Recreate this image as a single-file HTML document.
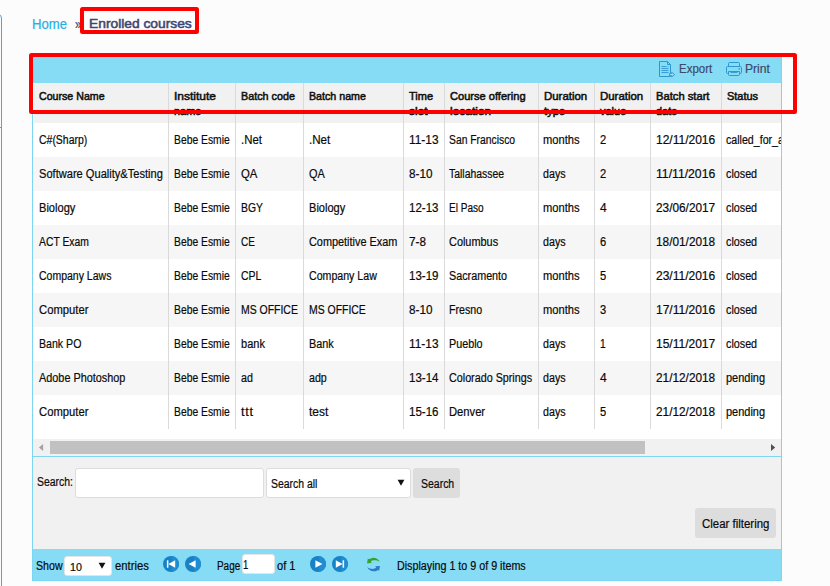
<!DOCTYPE html>
<html>
<head>
<meta charset="utf-8">
<title>Enrolled courses</title>
<style>
html,body{margin:0;padding:0;}
body{width:830px;height:586px;overflow:hidden;position:relative;background:#fcfcfc;font-family:"Liberation Sans",sans-serif;font-size:12px;color:#0a0a0a;}
.a{position:absolute;}
.t{position:absolute;white-space:pre;transform-origin:0 50%;display:block;-webkit-text-stroke:0.2px currentColor;}
.sep{position:absolute;top:83px;height:346px;width:1px;background:#dadada;}
.row{position:absolute;left:33px;width:748px;height:34px;background:#fff;}
.row.g{background:#f6f6f6;}
.red{position:absolute;border:4px solid #ff0000;border-radius:2.5px;box-sizing:border-box;}
.btn{position:absolute;background:#dddddd;border-radius:3px;}
.inp{position:absolute;background:#fff;border:1px solid #dcdcdc;border-radius:3px;box-sizing:border-box;}
</style>
</head>
<body>
<!-- left sidebar edge -->
<div class="a" style="left:-10px;top:14px;width:12px;height:600px;border:1px solid #2ab4e8;border-radius:4px;box-sizing:border-box;"></div>
<div class="a" style="left:0;top:127px;width:1px;height:1px;background:#2ab4e8;"></div>

<!-- grid container -->
<div class="a" style="left:32px;top:56px;width:750px;height:525px;border:1px solid #7cd5f3;box-sizing:border-box;background:#fff;"></div>
<!-- toolbar -->
<div class="a" style="left:33px;top:57px;width:748px;height:26px;background:#87dcf5;"></div>
<!-- header -->
<div class="a" style="left:34px;top:83px;width:747px;height:40px;background:#f1f1f1;"></div>
<!-- rows -->
<div class="row" style="top:123px"></div>
<div class="row g" style="top:157px"></div>
<div class="row" style="top:191px"></div>
<div class="row g" style="top:225px"></div>
<div class="row" style="top:259px"></div>
<div class="row g" style="top:293px"></div>
<div class="row" style="top:327px"></div>
<div class="row g" style="top:361px"></div>
<div class="row" style="top:395px"></div>
<!-- column separators -->
<div class="sep" style="left:168px"></div>
<div class="sep" style="left:235px"></div>
<div class="sep" style="left:303px"></div>
<div class="sep" style="left:403px"></div>
<div class="sep" style="left:444px"></div>
<div class="sep" style="left:538px"></div>
<div class="sep" style="left:594px"></div>
<div class="sep" style="left:650px"></div>
<div class="sep" style="left:721px"></div>

<!-- horizontal scrollbar -->
<div class="a" style="left:33px;top:439px;width:748px;height:17px;background:#f1f1f1;"></div>
<div class="a" style="left:50px;top:441px;width:595px;height:13px;background:#c1c1c1;"></div>
<svg class="a" style="left:38px;top:443px" width="6" height="9" viewBox="0 0 6 9"><path d="M5.1 0.9 L0.9 4.5 L5.1 8.1 Z" fill="#a3a3a3"/></svg>
<svg class="a" style="left:770px;top:443px" width="6" height="9" viewBox="0 0 6 9"><path d="M1.0 0.9 L5.2 4.5 L1.0 8.1 Z" fill="#505050"/></svg>

<!-- search panel -->
<div class="a" style="left:33px;top:456px;width:748px;height:1px;background:#7fd6f3;"></div>
<div class="a" style="left:33px;top:457px;width:748px;height:92px;background:#f1f1f1;"></div>
<div class="inp" style="left:75px;top:468px;width:188.6px;height:29.6px;"></div>
<div class="inp" style="left:266.4px;top:468px;width:144.3px;height:29.6px;"></div>
<svg class="a" style="left:397px;top:479px" width="8" height="8" viewBox="0 0 8 8"><path d="M0.6 0.8 L7.4 0.8 L4 6.8 Z" fill="#111"/></svg>
<div class="btn" style="left:413.4px;top:468px;width:46.6px;height:29.6px;"></div>
<div class="btn" style="left:695px;top:508px;width:81px;height:29.6px;"></div>

<!-- footer / pager -->
<div class="a" style="left:33px;top:549px;width:748px;height:31px;background:#87dcf5;"></div>
<div class="inp" style="left:64.4px;top:556.4px;width:47.2px;height:19.2px;border-color:#e4e4e4;"></div>
<svg class="a" style="left:98px;top:562px" width="8" height="8" viewBox="0 0 8 8"><path d="M0.6 0.8 L7.4 0.8 L4 6.8 Z" fill="#111"/></svg>
<div class="inp" style="left:242px;top:554.3px;width:32.7px;height:19.3px;border-color:#e4e4e4;"></div>

<!-- pager icons -->
<svg class="a" style="left:163px;top:556px" width="16" height="16" viewBox="0 0 16 16"><circle cx="8" cy="8" r="8" fill="#1882c7"/><path d="M8.8 0.04 A8 8 0 0 1 8.8 15.96 Z" fill="#208dd2"/><rect x="3.9" y="4.3" width="1.5" height="7.4" fill="#fff"/><path d="M5.4 8 L12.2 4.3 L12.2 11.7 Z" fill="#fff"/></svg>
<svg class="a" style="left:185px;top:556px" width="16" height="16" viewBox="0 0 16 16"><circle cx="8" cy="8" r="8" fill="#1882c7"/><path d="M8.8 0.04 A8 8 0 0 1 8.8 15.96 Z" fill="#208dd2"/><path d="M3.6 8 L10.6 4.3 L10.6 11.7 Z" fill="#fff"/></svg>
<svg class="a" style="left:310px;top:556px" width="16" height="16" viewBox="0 0 16 16"><circle cx="8" cy="8" r="8" fill="#1882c7"/><path d="M8.8 0.04 A8 8 0 0 1 8.8 15.96 Z" fill="#208dd2"/><path d="M12.4 8 L5.4 4.3 L5.4 11.7 Z" fill="#fff"/></svg>
<svg class="a" style="left:332px;top:556px" width="16" height="16" viewBox="0 0 16 16"><circle cx="8" cy="8" r="8" fill="#1882c7"/><path d="M8.8 0.04 A8 8 0 0 1 8.8 15.96 Z" fill="#208dd2"/><rect x="10.6" y="4.3" width="1.5" height="7.4" fill="#fff"/><path d="M10.6 8 L3.8 4.3 L3.8 11.7 Z" fill="#fff"/></svg>
<!-- refresh -->
<svg class="a" style="left:366px;top:557px" width="15" height="15" viewBox="0 0 15 15">
<path id="rf" d="M13.9 4.9 C12.2 2.2 9.4 0.6 6.6 0.9 C5.2 1.05 3.9 1.6 3.1 2.3 L1.9 1.4 L1.0 6.3 L5.9 6.0 L4.7 4.6 C6.4 3.1 9.8 2.5 13.9 4.9 Z" fill="#35a12e"/>
<path d="M13.9 4.9 C12.2 2.2 9.4 0.6 6.6 0.9 C5.2 1.05 3.9 1.6 3.1 2.3 L1.9 1.4 L1.0 6.3 L5.9 6.0 L4.7 4.6 C6.4 3.1 9.8 2.5 13.9 4.9 Z" fill="#2a7bc8" transform="rotate(180 7.5 7.6)"/>
</svg>

<!-- toolbar icons -->
<svg class="a" style="left:658px;top:61px" width="18" height="17" viewBox="0 0 18 17" fill="none" stroke="#2f97d0" stroke-width="1">
<path d="M1.5 0.5 H9.5 L12.5 3.5 V15.5 H1.5 Z"/><path d="M9.5 0.5 V3.5 H12.5"/>
<path d="M3.5 5.5 H8.5 M9.7 5.5 H10.5 M3.5 7.5 H10.5 M3.5 9.5 H10.5 M3.5 11.5 H10.5" stroke-width="0.9"/>
<path d="M11.5 12.6 H13.7 V11.3 L16.6 13.6 L13.7 15.9 V14.6 H11.5 Z" fill="#a9e5f8"/>
</svg>
<svg class="a" style="left:725px;top:61px" width="18" height="16" viewBox="0 0 18 16" fill="none" stroke="#2f97d0" stroke-width="1">
<path d="M3.5 5.5 V2.5 Q3.5 1.5 4.5 1.5 H13.5 Q14.5 1.5 14.5 2.5 V5.5"/>
<rect x="1.5" y="5.5" width="15" height="7" rx="1.2"/>
<path d="M3.5 10.5 H14.5 V13.5 Q14.5 14.5 13.5 14.5 H4.5 Q3.5 14.5 3.5 13.5 Z" fill="#87dcf5"/>
<path d="M5.5 11.5 H12.5" stroke-width="0.9"/>
<circle cx="14.2" cy="7.9" r="0.45" fill="#2f97d0"/>
</svg>

<!-- clipped cell text (last column) -->
<div class="a" style="left:722px;top:123px;width:59px;height:306px;overflow:hidden;"><div class="a" style="left:-722px;top:-123px;width:830px;height:586px;">
<span class="t" style="left:726.45px;top:132.00px;font-size:12px;line-height:16px;color:#0a0a0a;transform:scaleX(0.8856);">called_for_admission</span>
<span class="t" style="left:726.45px;top:166.00px;font-size:12px;line-height:16px;color:#0a0a0a;transform:scaleX(0.8966);">closed</span>
<span class="t" style="left:726.45px;top:200.00px;font-size:12px;line-height:16px;color:#0a0a0a;transform:scaleX(0.8966);">closed</span>
<span class="t" style="left:726.45px;top:234.00px;font-size:12px;line-height:16px;color:#0a0a0a;transform:scaleX(0.8966);">closed</span>
<span class="t" style="left:726.45px;top:268.00px;font-size:12px;line-height:16px;color:#0a0a0a;transform:scaleX(0.8966);">closed</span>
<span class="t" style="left:726.45px;top:302.00px;font-size:12px;line-height:16px;color:#0a0a0a;transform:scaleX(0.8966);">closed</span>
<span class="t" style="left:726.45px;top:336.00px;font-size:12px;line-height:16px;color:#0a0a0a;transform:scaleX(0.8966);">closed</span>
<span class="t" style="left:726.45px;top:370.00px;font-size:12px;line-height:16px;color:#0a0a0a;transform:scaleX(0.9153);">pending</span>
<span class="t" style="left:726.45px;top:404.00px;font-size:12px;line-height:16px;color:#0a0a0a;transform:scaleX(0.9153);">pending</span>
</div></div>

<span class="t" style="left:32.12px;top:14.60px;font-size:14.0px;line-height:18px;color:#22b0e7;transform:scaleX(0.9374);">Home</span>
<span class="t" style="left:74.83px;top:15.40px;font-size:14.0px;line-height:18px;color:#3d4673;transform:scaleX(0.8105);">»</span>
<span class="t" style="left:89.18px;top:14.80px;font-size:13.5px;line-height:18px;color:#3d4673;transform:scaleX(1.0221);-webkit-text-stroke:0.55px currentColor;">Enrolled courses</span>
<span class="t" style="left:678.95px;top:61.30px;font-size:12.4px;line-height:16px;color:#3d4a6b;transform:scaleX(0.9278);">Export</span>
<span class="t" style="left:745.25px;top:61.30px;font-size:12.4px;line-height:16px;color:#3d4a6b;transform:scaleX(0.9781);">Print</span>
<span class="t" style="left:39.10px;top:88.00px;font-size:11.6px;line-height:15px;color:#111;transform:scaleX(0.9168);-webkit-text-stroke:0.55px currentColor;">Course Name</span>
<span class="t" style="left:174.11px;top:88.00px;font-size:11.6px;line-height:15px;color:#111;transform:scaleX(1.0337);-webkit-text-stroke:0.55px currentColor;">Institute</span>
<span class="t" style="left:174.11px;top:103.00px;font-size:11.6px;line-height:15px;color:#111;transform:scaleX(0.9470);-webkit-text-stroke:0.55px currentColor;">name</span>
<span class="t" style="left:240.61px;top:88.00px;font-size:11.6px;line-height:15px;color:#111;transform:scaleX(0.9287);-webkit-text-stroke:0.55px currentColor;">Batch code</span>
<span class="t" style="left:309.20px;top:88.00px;font-size:11.6px;line-height:15px;color:#111;transform:scaleX(0.9193);-webkit-text-stroke:0.55px currentColor;">Batch name</span>
<span class="t" style="left:408.91px;top:88.00px;font-size:11.6px;line-height:15px;color:#111;transform:scaleX(0.9501);-webkit-text-stroke:0.55px currentColor;">Time</span>
<span class="t" style="left:408.91px;top:103.00px;font-size:11.6px;line-height:15px;color:#111;transform:scaleX(1.0350);-webkit-text-stroke:0.55px currentColor;">slot</span>
<span class="t" style="left:450.31px;top:88.00px;font-size:11.6px;line-height:15px;color:#111;transform:scaleX(0.9559);-webkit-text-stroke:0.55px currentColor;">Course offering</span>
<span class="t" style="left:450.31px;top:103.00px;font-size:11.6px;line-height:15px;color:#111;transform:scaleX(1.0328);-webkit-text-stroke:0.55px currentColor;">location</span>
<span class="t" style="left:544.30px;top:88.00px;font-size:11.6px;line-height:15px;color:#111;transform:scaleX(0.9852);-webkit-text-stroke:0.55px currentColor;">Duration</span>
<span class="t" style="left:544.30px;top:103.00px;font-size:11.6px;line-height:15px;color:#111;transform:scaleX(0.9707);-webkit-text-stroke:0.55px currentColor;">type</span>
<span class="t" style="left:600.30px;top:88.00px;font-size:11.6px;line-height:15px;color:#111;transform:scaleX(0.9852);-webkit-text-stroke:0.55px currentColor;">Duration</span>
<span class="t" style="left:600.30px;top:103.00px;font-size:11.6px;line-height:15px;color:#111;transform:scaleX(0.9480);-webkit-text-stroke:0.55px currentColor;">value</span>
<span class="t" style="left:656.30px;top:88.00px;font-size:11.6px;line-height:15px;color:#111;transform:scaleX(0.9649);-webkit-text-stroke:0.55px currentColor;">Batch start</span>
<span class="t" style="left:656.30px;top:103.00px;font-size:11.6px;line-height:15px;color:#111;transform:scaleX(0.9424);-webkit-text-stroke:0.55px currentColor;">date</span>
<span class="t" style="left:726.90px;top:88.00px;font-size:11.6px;line-height:15px;color:#111;transform:scaleX(0.9423);-webkit-text-stroke:0.55px currentColor;">Status</span>
<span class="t" style="left:38.65px;top:132.00px;font-size:12px;line-height:16px;color:#0a0a0a;transform:scaleX(0.8725);">C#(Sharp)</span>
<span class="t" style="left:173.85px;top:132.00px;font-size:12px;line-height:16px;color:#0a0a0a;transform:scaleX(0.8609);">Bebe Esmie</span>
<span class="t" style="left:240.65px;top:132.00px;font-size:12px;line-height:16px;color:#0a0a0a;transform:scaleX(0.9494);">.Net</span>
<span class="t" style="left:308.75px;top:132.00px;font-size:12px;line-height:16px;color:#0a0a0a;transform:scaleX(0.9676);">.Net</span>
<span class="t" style="left:408.65px;top:132.00px;font-size:12px;line-height:16px;color:#0a0a0a;transform:scaleX(0.9896);">11-13</span>
<span class="t" style="left:449.45px;top:132.00px;font-size:12px;line-height:16px;color:#0a0a0a;transform:scaleX(0.8618);">San Francisco</span>
<span class="t" style="left:543.45px;top:132.00px;font-size:12px;line-height:16px;color:#0a0a0a;transform:scaleX(0.9299);">months</span>
<span class="t" style="left:599.85px;top:132.00px;font-size:12px;line-height:16px;color:#0a0a0a;transform:scaleX(0.9274);">2</span>
<span class="t" style="left:655.85px;top:132.00px;font-size:12px;line-height:16px;color:#0a0a0a;transform:scaleX(1.0005);">12/11/2016</span>
<span class="t" style="left:38.65px;top:166.00px;font-size:12px;line-height:16px;color:#0a0a0a;transform:scaleX(0.9242);">Software Quality&amp;Testing</span>
<span class="t" style="left:173.85px;top:166.00px;font-size:12px;line-height:16px;color:#0a0a0a;transform:scaleX(0.8609);">Bebe Esmie</span>
<span class="t" style="left:240.65px;top:166.00px;font-size:12px;line-height:16px;color:#0a0a0a;transform:scaleX(0.9457);">QA</span>
<span class="t" style="left:308.75px;top:166.00px;font-size:12px;line-height:16px;color:#0a0a0a;transform:scaleX(0.9111);">QA</span>
<span class="t" style="left:408.65px;top:166.00px;font-size:12px;line-height:16px;color:#0a0a0a;transform:scaleX(0.9780);">8-10</span>
<span class="t" style="left:449.45px;top:166.00px;font-size:12px;line-height:16px;color:#0a0a0a;transform:scaleX(0.8695);">Tallahassee</span>
<span class="t" style="left:543.45px;top:166.00px;font-size:12px;line-height:16px;color:#0a0a0a;transform:scaleX(0.8913);">days</span>
<span class="t" style="left:599.85px;top:166.00px;font-size:12px;line-height:16px;color:#0a0a0a;transform:scaleX(0.9274);">2</span>
<span class="t" style="left:655.85px;top:166.00px;font-size:12px;line-height:16px;color:#0a0a0a;transform:scaleX(1.0158);">11/11/2016</span>
<span class="t" style="left:38.65px;top:200.00px;font-size:12px;line-height:16px;color:#0a0a0a;transform:scaleX(0.9249);">Biology</span>
<span class="t" style="left:173.85px;top:200.00px;font-size:12px;line-height:16px;color:#0a0a0a;transform:scaleX(0.8609);">Bebe Esmie</span>
<span class="t" style="left:240.65px;top:200.00px;font-size:12px;line-height:16px;color:#0a0a0a;transform:scaleX(0.8642);">BGY</span>
<span class="t" style="left:308.75px;top:200.00px;font-size:12px;line-height:16px;color:#0a0a0a;transform:scaleX(0.9223);">Biology</span>
<span class="t" style="left:408.65px;top:200.00px;font-size:12px;line-height:16px;color:#0a0a0a;transform:scaleX(0.9609);">12-13</span>
<span class="t" style="left:449.45px;top:200.00px;font-size:12px;line-height:16px;color:#0a0a0a;transform:scaleX(0.8366);">El Paso</span>
<span class="t" style="left:543.45px;top:200.00px;font-size:12px;line-height:16px;color:#0a0a0a;transform:scaleX(0.9299);">months</span>
<span class="t" style="left:599.85px;top:200.00px;font-size:12px;line-height:16px;color:#0a0a0a;transform:scaleX(1.0022);">4</span>
<span class="t" style="left:655.85px;top:200.00px;font-size:12px;line-height:16px;color:#0a0a0a;transform:scaleX(0.9857);">23/06/2017</span>
<span class="t" style="left:38.65px;top:234.00px;font-size:12px;line-height:16px;color:#0a0a0a;transform:scaleX(0.8634);">ACT Exam</span>
<span class="t" style="left:173.85px;top:234.00px;font-size:12px;line-height:16px;color:#0a0a0a;transform:scaleX(0.8609);">Bebe Esmie</span>
<span class="t" style="left:240.65px;top:234.00px;font-size:12px;line-height:16px;color:#0a0a0a;transform:scaleX(0.8339);">CE</span>
<span class="t" style="left:308.75px;top:234.00px;font-size:12px;line-height:16px;color:#0a0a0a;transform:scaleX(0.9068);">Competitive Exam</span>
<span class="t" style="left:408.65px;top:234.00px;font-size:12px;line-height:16px;color:#0a0a0a;transform:scaleX(0.9745);">7-8</span>
<span class="t" style="left:449.45px;top:234.00px;font-size:12px;line-height:16px;color:#0a0a0a;transform:scaleX(0.9088);">Columbus</span>
<span class="t" style="left:543.45px;top:234.00px;font-size:12px;line-height:16px;color:#0a0a0a;transform:scaleX(0.8913);">days</span>
<span class="t" style="left:599.85px;top:234.00px;font-size:12px;line-height:16px;color:#0a0a0a;transform:scaleX(0.9274);">6</span>
<span class="t" style="left:655.85px;top:234.00px;font-size:12px;line-height:16px;color:#0a0a0a;transform:scaleX(0.9857);">18/01/2018</span>
<span class="t" style="left:38.65px;top:268.00px;font-size:12px;line-height:16px;color:#0a0a0a;transform:scaleX(0.8753);">Company Laws</span>
<span class="t" style="left:173.85px;top:268.00px;font-size:12px;line-height:16px;color:#0a0a0a;transform:scaleX(0.8609);">Bebe Esmie</span>
<span class="t" style="left:240.65px;top:268.00px;font-size:12px;line-height:16px;color:#0a0a0a;transform:scaleX(0.8740);">CPL</span>
<span class="t" style="left:308.75px;top:268.00px;font-size:12px;line-height:16px;color:#0a0a0a;transform:scaleX(0.8838);">Company Law</span>
<span class="t" style="left:408.65px;top:268.00px;font-size:12px;line-height:16px;color:#0a0a0a;transform:scaleX(0.9609);">13-19</span>
<span class="t" style="left:449.45px;top:268.00px;font-size:12px;line-height:16px;color:#0a0a0a;transform:scaleX(0.8980);">Sacramento</span>
<span class="t" style="left:543.45px;top:268.00px;font-size:12px;line-height:16px;color:#0a0a0a;transform:scaleX(0.9299);">months</span>
<span class="t" style="left:599.85px;top:268.00px;font-size:12px;line-height:16px;color:#0a0a0a;transform:scaleX(0.9274);">5</span>
<span class="t" style="left:655.85px;top:268.00px;font-size:12px;line-height:16px;color:#0a0a0a;transform:scaleX(1.0005);">23/11/2016</span>
<span class="t" style="left:38.65px;top:302.00px;font-size:12px;line-height:16px;color:#0a0a0a;transform:scaleX(0.9376);">Computer</span>
<span class="t" style="left:173.85px;top:302.00px;font-size:12px;line-height:16px;color:#0a0a0a;transform:scaleX(0.8609);">Bebe Esmie</span>
<span class="t" style="left:240.65px;top:302.00px;font-size:12px;line-height:16px;color:#0a0a0a;transform:scaleX(0.8708);">MS OFFICE</span>
<span class="t" style="left:308.75px;top:302.00px;font-size:12px;line-height:16px;color:#0a0a0a;transform:scaleX(0.8693);">MS OFFICE</span>
<span class="t" style="left:408.65px;top:302.00px;font-size:12px;line-height:16px;color:#0a0a0a;transform:scaleX(0.9780);">8-10</span>
<span class="t" style="left:449.45px;top:302.00px;font-size:12px;line-height:16px;color:#0a0a0a;transform:scaleX(0.8860);">Fresno</span>
<span class="t" style="left:543.45px;top:302.00px;font-size:12px;line-height:16px;color:#0a0a0a;transform:scaleX(0.9299);">months</span>
<span class="t" style="left:599.85px;top:302.00px;font-size:12px;line-height:16px;color:#0a0a0a;transform:scaleX(0.9274);">3</span>
<span class="t" style="left:655.85px;top:302.00px;font-size:12px;line-height:16px;color:#0a0a0a;transform:scaleX(1.0005);">17/11/2016</span>
<span class="t" style="left:38.65px;top:336.00px;font-size:12px;line-height:16px;color:#0a0a0a;transform:scaleX(0.8828);">Bank PO</span>
<span class="t" style="left:173.85px;top:336.00px;font-size:12px;line-height:16px;color:#0a0a0a;transform:scaleX(0.8609);">Bebe Esmie</span>
<span class="t" style="left:240.65px;top:336.00px;font-size:12px;line-height:16px;color:#0a0a0a;transform:scaleX(0.9182);">bank</span>
<span class="t" style="left:308.75px;top:336.00px;font-size:12px;line-height:16px;color:#0a0a0a;transform:scaleX(0.9065);">Bank</span>
<span class="t" style="left:408.65px;top:336.00px;font-size:12px;line-height:16px;color:#0a0a0a;transform:scaleX(0.9896);">11-13</span>
<span class="t" style="left:449.45px;top:336.00px;font-size:12px;line-height:16px;color:#0a0a0a;transform:scaleX(0.8991);">Pueblo</span>
<span class="t" style="left:543.45px;top:336.00px;font-size:12px;line-height:16px;color:#0a0a0a;transform:scaleX(0.8913);">days</span>
<span class="t" style="left:599.85px;top:336.00px;font-size:12px;line-height:16px;color:#0a0a0a;transform:scaleX(0.8526);">1</span>
<span class="t" style="left:655.85px;top:336.00px;font-size:12px;line-height:16px;color:#0a0a0a;transform:scaleX(1.0005);">15/11/2017</span>
<span class="t" style="left:38.65px;top:370.00px;font-size:12px;line-height:16px;color:#0a0a0a;transform:scaleX(0.9055);">Adobe Photoshop</span>
<span class="t" style="left:173.85px;top:370.00px;font-size:12px;line-height:16px;color:#0a0a0a;transform:scaleX(0.8609);">Bebe Esmie</span>
<span class="t" style="left:240.65px;top:370.00px;font-size:12px;line-height:16px;color:#0a0a0a;transform:scaleX(0.8909);">ad</span>
<span class="t" style="left:308.75px;top:370.00px;font-size:12px;line-height:16px;color:#0a0a0a;transform:scaleX(0.8887);">adp</span>
<span class="t" style="left:408.65px;top:370.00px;font-size:12px;line-height:16px;color:#0a0a0a;transform:scaleX(0.9609);">13-14</span>
<span class="t" style="left:449.45px;top:370.00px;font-size:12px;line-height:16px;color:#0a0a0a;transform:scaleX(0.8963);">Colorado Springs</span>
<span class="t" style="left:543.45px;top:370.00px;font-size:12px;line-height:16px;color:#0a0a0a;transform:scaleX(0.8913);">days</span>
<span class="t" style="left:599.85px;top:370.00px;font-size:12px;line-height:16px;color:#0a0a0a;transform:scaleX(1.0022);">4</span>
<span class="t" style="left:655.85px;top:370.00px;font-size:12px;line-height:16px;color:#0a0a0a;transform:scaleX(0.9857);">21/12/2018</span>
<span class="t" style="left:38.65px;top:404.00px;font-size:12px;line-height:16px;color:#0a0a0a;transform:scaleX(0.9376);">Computer</span>
<span class="t" style="left:173.85px;top:404.00px;font-size:12px;line-height:16px;color:#0a0a0a;transform:scaleX(0.8609);">Bebe Esmie</span>
<span class="t" style="left:240.65px;top:404.00px;font-size:12px;line-height:16px;color:#0a0a0a;transform:scaleX(1.0600);letter-spacing:0.72px;">ttt</span>
<span class="t" style="left:308.75px;top:404.00px;font-size:12px;line-height:16px;color:#0a0a0a;transform:scaleX(0.9978);">test</span>
<span class="t" style="left:408.65px;top:404.00px;font-size:12px;line-height:16px;color:#0a0a0a;transform:scaleX(0.9609);">15-16</span>
<span class="t" style="left:449.45px;top:404.00px;font-size:12px;line-height:16px;color:#0a0a0a;transform:scaleX(0.9332);">Denver</span>
<span class="t" style="left:543.45px;top:404.00px;font-size:12px;line-height:16px;color:#0a0a0a;transform:scaleX(0.8913);">days</span>
<span class="t" style="left:599.85px;top:404.00px;font-size:12px;line-height:16px;color:#0a0a0a;transform:scaleX(0.9274);">5</span>
<span class="t" style="left:655.85px;top:404.00px;font-size:12px;line-height:16px;color:#0a0a0a;transform:scaleX(0.9857);">21/12/2018</span>
<span class="t" style="left:37.45px;top:474.00px;font-size:12px;line-height:16px;color:#0a0a0a;transform:scaleX(0.8680);">Search:</span>
<span class="t" style="left:271.45px;top:475.60px;font-size:12px;line-height:16px;color:#0a0a0a;transform:scaleX(0.8694);">Search all</span>
<span class="t" style="left:420.55px;top:475.60px;font-size:12px;line-height:16px;color:#0a0a0a;transform:scaleX(0.8730);">Search</span>
<span class="t" style="left:702.15px;top:515.60px;font-size:12px;line-height:16px;color:#0a0a0a;transform:scaleX(0.9533);">Clear filtering</span>
<span class="t" style="left:35.65px;top:557.60px;font-size:12px;line-height:16px;color:#0a0a0a;transform:scaleX(0.8858);">Show</span>
<span class="t" style="left:69.66px;top:560.40px;font-size:11.5px;line-height:15px;color:#0a0a0a;transform:scaleX(0.9278);">10</span>
<span class="t" style="left:114.65px;top:557.60px;font-size:12px;line-height:16px;color:#0a0a0a;transform:scaleX(0.9381);">entries</span>
<span class="t" style="left:216.95px;top:557.60px;font-size:12px;line-height:16px;color:#0a0a0a;transform:scaleX(0.8277);">Page</span>
<span class="t" style="left:243.45px;top:557.20px;font-size:12px;line-height:16px;color:#0a0a0a;transform:scaleX(0.7928);">1</span>
<span class="t" style="left:276.85px;top:557.60px;font-size:12px;line-height:16px;color:#0a0a0a;transform:scaleX(0.9244);">of 1</span>
<span class="t" style="left:397.15px;top:557.60px;font-size:12px;line-height:16px;color:#0a0a0a;transform:scaleX(0.8933);">Displaying 1 to 9 of 9 items</span>

<!-- annotation boxes -->
<div class="red" style="left:80px;top:7px;width:119px;height:27px;"></div>
<div class="red" style="left:29px;top:53px;width:768px;height:61px;"></div>
</body>
</html>
